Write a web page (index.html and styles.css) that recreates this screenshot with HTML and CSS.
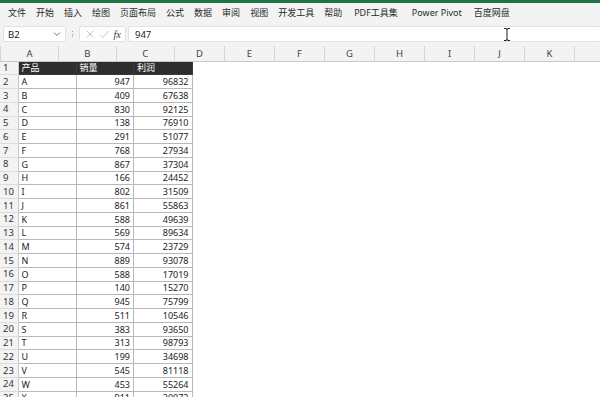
FILE: index.html
```html
<!DOCTYPE html>
<html lang="zh">
<head>
  <meta charset="UTF-8">
  <title>Excel - 产品销量</title>
  <link rel="stylesheet" href="styles.css">
</head>
<body>

  <div class="topbar"></div>

  <div class="menu">
    <span>文件</span>
    <span>开始</span>
    <span>插入</span>
    <span>绘图</span>
    <span>页面布局</span>
    <span>公式</span>
    <span>数据</span>
    <span>审阅</span>
    <span>视图</span>
    <span>开发工具</span>
    <span>帮助</span>
    <span class="wide">PDF工具集</span>
    <span class="wide">Power Pivot</span>
    <span>百度网盘</span>
  </div>

  <div class="fbar">
    <div class="namebox">
      <span>B2</span>
      <svg width="8" height="6" viewBox="0 0 8 6"><path d="M1 1.5 L4 4.5 L7 1.5" fill="none" stroke="#777" stroke-width="1"/></svg>
    </div>
    <div class="dots"><i></i><i></i><i></i></div>
    <div class="fbtns">
      <svg width="10" height="10" viewBox="0 0 10 10"><path d="M1.5 1.5 L8.5 8.5 M8.5 1.5 L1.5 8.5" stroke="#c4c4c4" stroke-width="1"/></svg>
      <svg width="11" height="10" viewBox="0 0 11 10"><path d="M1 5.5 L4 8.5 L10 1.5" fill="none" stroke="#c4c4c4" stroke-width="1"/></svg>
      <span class="fx">fx</span>
    </div>
    <div class="finput">
      <span>947</span>
      <svg class="ibeam" width="8" height="13" viewBox="0 0 8 13"><path d="M1 0.5 H3 Q4 0.5 4 2 V11 Q4 12.5 3 12.5 H1 M7 0.5 H5 Q4 0.5 4 2 M7 12.5 H5 Q4 12.5 4 11" fill="none" stroke="#222" stroke-width="1"/></svg>
    </div>
  </div>

  <div class="sheet">
    <div class="colhead">
      <span class="corner"><b></b></span>
      <span class="ca">A</span><span class="cb">B</span><span class="cc">C</span>
      <span class="cw">D</span><span class="cw">E</span><span class="cw">F</span><span class="cw">G</span>
      <span class="cw">H</span><span class="cw">I</span><span class="cw">J</span><span class="cw">K</span>
      <span class="rest"></span>
    </div>

    <div class="row head"><span class="rh">1</span><span class="ca">产品</span><span class="cb">销量</span><span class="cc">利润</span></div>
    <div class="row"><span class="rh">2</span><span class="ca">A</span><span class="cb n">947</span><span class="cc n">96832</span></div>
    <div class="row"><span class="rh">3</span><span class="ca">B</span><span class="cb n">409</span><span class="cc n">67638</span></div>
    <div class="row"><span class="rh">4</span><span class="ca">C</span><span class="cb n">830</span><span class="cc n">92125</span></div>
    <div class="row"><span class="rh">5</span><span class="ca">D</span><span class="cb n">138</span><span class="cc n">76910</span></div>
    <div class="row"><span class="rh">6</span><span class="ca">E</span><span class="cb n">291</span><span class="cc n">51077</span></div>
    <div class="row"><span class="rh">7</span><span class="ca">F</span><span class="cb n">768</span><span class="cc n">27934</span></div>
    <div class="row"><span class="rh">8</span><span class="ca">G</span><span class="cb n">867</span><span class="cc n">37304</span></div>
    <div class="row"><span class="rh">9</span><span class="ca">H</span><span class="cb n">166</span><span class="cc n">24452</span></div>
    <div class="row"><span class="rh">10</span><span class="ca">I</span><span class="cb n">802</span><span class="cc n">31509</span></div>
    <div class="row"><span class="rh">11</span><span class="ca">J</span><span class="cb n">861</span><span class="cc n">55863</span></div>
    <div class="row"><span class="rh">12</span><span class="ca">K</span><span class="cb n">588</span><span class="cc n">49639</span></div>
    <div class="row"><span class="rh">13</span><span class="ca">L</span><span class="cb n">569</span><span class="cc n">89634</span></div>
    <div class="row"><span class="rh">14</span><span class="ca">M</span><span class="cb n">574</span><span class="cc n">23729</span></div>
    <div class="row"><span class="rh">15</span><span class="ca">N</span><span class="cb n">889</span><span class="cc n">93078</span></div>
    <div class="row"><span class="rh">16</span><span class="ca">O</span><span class="cb n">588</span><span class="cc n">17019</span></div>
    <div class="row"><span class="rh">17</span><span class="ca">P</span><span class="cb n">140</span><span class="cc n">15270</span></div>
    <div class="row"><span class="rh">18</span><span class="ca">Q</span><span class="cb n">945</span><span class="cc n">75799</span></div>
    <div class="row"><span class="rh">19</span><span class="ca">R</span><span class="cb n">511</span><span class="cc n">10546</span></div>
    <div class="row"><span class="rh">20</span><span class="ca">S</span><span class="cb n">383</span><span class="cc n">93650</span></div>
    <div class="row"><span class="rh">21</span><span class="ca">T</span><span class="cb n">313</span><span class="cc n">98793</span></div>
    <div class="row"><span class="rh">22</span><span class="ca">U</span><span class="cb n">199</span><span class="cc n">34698</span></div>
    <div class="row"><span class="rh">23</span><span class="ca">V</span><span class="cb n">545</span><span class="cc n">81118</span></div>
    <div class="row"><span class="rh">24</span><span class="ca">W</span><span class="cb n">453</span><span class="cc n">55264</span></div>
    <div class="row"><span class="rh">25</span><span class="ca">X</span><span class="cb n">911</span><span class="cc n">20072</span></div>
  </div>

</body>
</html>
```

FILE: styles.css
```css
* {
  box-sizing: border-box;
}

body {
  margin: 0;
  width: 600px;
  height: 397px;
  overflow: hidden;
  font-family: "Noto Sans", "Noto Sans CJK SC", sans-serif;
  color: #222;
  background-color: #fff;
}

.topbar {
  height: 3px;
  background-color: #1f7244;
}

.menu {
  height: 19px;
  background-color: #f3f3f3;
  display: flex;
  align-items: center;
  gap: 10px;
  padding-left: 8px;
  font-size: 9px;
  color: #2a2a2a;
}

.menu .wide {
  margin-left: 2px;
  margin-right: 2px;
}

.fbar {
  height: 24px;
  background-color: #f3f3f3;
  display: flex;
  align-items: center;
  padding-left: 3px;
}

.namebox,
.fbtns,
.finput {
  height: 16px;
  background-color: #fff;
  border: 1px solid #e2e2e2;
  border-radius: 2px;
  display: flex;
  align-items: center;
  font-size: 9.5px;
}

.namebox {
  width: 63px;
  padding: 0 4px;
  justify-content: space-between;
}

.dots {
  width: 13px;
  display: flex;
  flex-direction: column;
  align-items: center;
  gap: 1.5px;
}

.dots i {
  width: 1px;
  height: 1px;
  background-color: #999;
}

.fbtns {
  width: 47px;
  padding: 0 4px 0 5px;
  justify-content: space-between;
}

.fx {
  font-family: "Liberation Serif", serif;
  font-style: italic;
  font-size: 10.5px;
  color: #444;
}

.finput {
  flex: 1;
  margin-left: 2px;
  padding-left: 6px;
  border-right: none;
  position: relative;
}

.ibeam {
  position: absolute;
  left: 374px;
  top: 1px;
}

.sheet {
  font-size: 9px;
}

.colhead,
.row {
  display: flex;
}

.colhead {
  height: 15.5px;
  background-color: #f3f3f3;
  border-bottom: 1px solid #c8c8c8;
  color: #444;
  font-size: 9.5px;
}

.colhead span {
  display: flex;
  align-items: center;
  justify-content: center;
  border-right: 1px solid #d6d6d6;
}

.colhead .rest {
  flex: 1;
  border-right: none;
}

.corner {
  position: relative;
}

.corner b {
  position: absolute;
  right: 2px;
  bottom: 2px;
  width: 0;
  height: 0;
  border-left: 7px solid transparent;
  border-bottom: 7px solid #c9c9c9;
}

.rh {
  width: 18.5px;
  flex: none;
}

.ca {
  width: 58px;
}

.cb {
  width: 57.5px;
}

.cc {
  width: 58.5px;
}

.cw {
  width: 50px;
}

.row {
  height: 13.75px;
}

.row span {
  display: flex;
  align-items: center;
  padding: 0 3px;
  line-height: 1;
}

.row .rh {
  background-color: #f3f3f3;
  border-bottom: 1px solid #dcdcdc;
  border-right: 1px solid #c8c8c8;
  color: #333;
  font-size: 9.5px;
}

.row .ca,
.row .cb,
.row .cc {
  border-right: 1px solid #b8b8b8;
  border-bottom: 1px solid #b8b8b8;
}

.row .n {
  justify-content: flex-end;
}

.head span.ca,
.head span.cb,
.head span.cc {
  background-color: #2e2e2e;
  color: #fff;
  border-color: #3a3a3a;
}
```
